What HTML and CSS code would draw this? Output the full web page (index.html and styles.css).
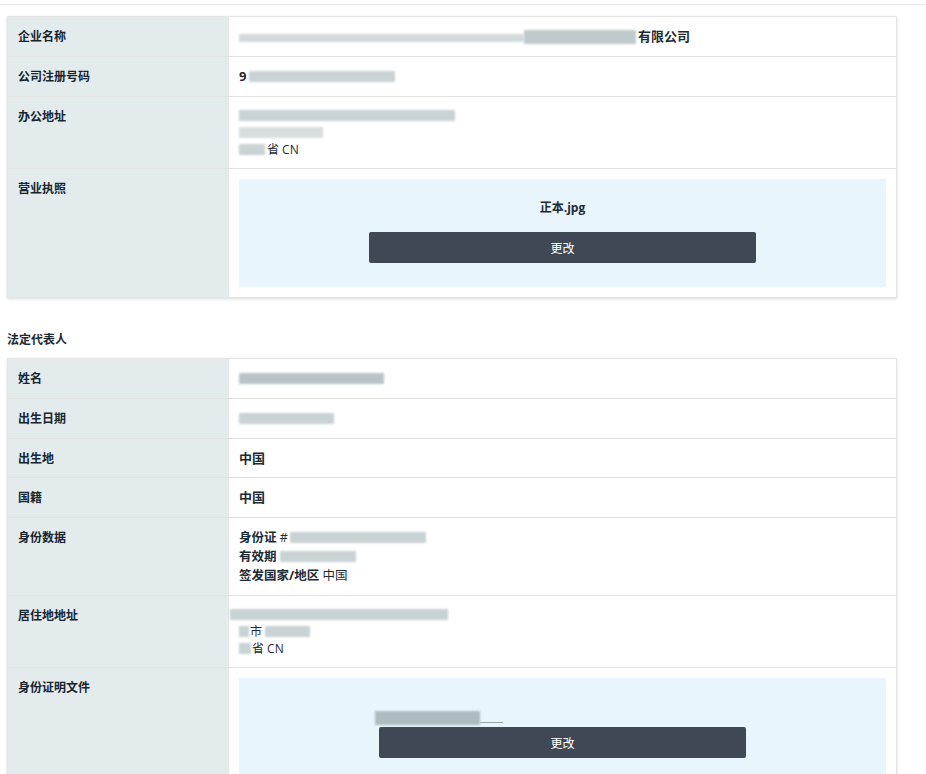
FILE: index.html
```html
<!DOCTYPE html>
<html lang="zh">

<head>
    <meta charset="utf-8">
    <meta name="viewport" content="width=device-width, initial-scale=1.0">
    <title>企业资料</title>
    <link rel="stylesheet" href="styles.css">
</head>

<body>

    <div class="topbar"></div>

    <main class="page">

        <section class="card">
            <div class="row">
                <div class="label">企业名称</div>
                <div class="value strong"><span class="blur b-company"></span><span class="blur b-company2"></span>有限公司</div>
            </div>
            <div class="row">
                <div class="label">公司注册号码</div>
                <div class="value strong">9<span class="blur b-regno"></span></div>
            </div>
            <div class="row">
                <div class="label">办公地址</div>
                <div class="value address">
                    <div><span class="blur b-addr1"></span></div>
                    <div><span class="blur b-addr2"></span></div>
                    <div><span class="blur b-addr3"></span>省 CN</div>
                </div>
            </div>
            <div class="row">
                <div class="label">营业执照</div>
                <div class="value file-cell">
                    <div class="upload">
                        <div class="filename">正本.jpg</div>
                        <button class="btn">更改</button>
                    </div>
                </div>
            </div>
        </section>

        <h3 class="section-title">法定代表人</h3>

        <section class="card">
            <div class="row">
                <div class="label">姓名</div>
                <div class="value"><span class="blur b-name"></span></div>
            </div>
            <div class="row">
                <div class="label">出生日期</div>
                <div class="value"><span class="blur b-birth"></span></div>
            </div>
            <div class="row row-tight">
                <div class="label">出生地</div>
                <div class="value strong">中国</div>
            </div>
            <div class="row">
                <div class="label">国籍</div>
                <div class="value strong">中国</div>
            </div>
            <div class="row">
                <div class="label">身份数据</div>
                <div class="value idlist">
                    <div><b>身份证</b> #<span class="blur b-idno"></span></div>
                    <div><b>有效期</b> <span class="blur b-expiry"></span></div>
                    <div><b>签发国家/地区</b> 中国</div>
                </div>
            </div>
            <div class="row">
                <div class="label">居住地地址</div>
                <div class="value address">
                    <div><span class="blur b-home1"></span></div>
                    <div><span class="blur b-home2"></span>市 <span class="blur b-home3"></span></div>
                    <div><span class="blur b-home4"></span>省 CN</div>
                </div>
            </div>
            <div class="row">
                <div class="label">身份证明文件</div>
                <div class="value file-cell">
                    <div class="upload upload-id">
                        <div class="filename"><span class="blur b-file"></span><span class="file-line"></span></div>
                        <button class="btn btn-id">更改</button>
                    </div>
                </div>
            </div>
        </section>

    </main>

</body>

</html>
```

FILE: styles.css
```css
body {
    margin: 0;
    background-color: #fff;
    font-family: "Open Sans", "Noto Sans CJK SC", sans-serif;
    font-size: 12px;
    color: #1e2a33;
}

.topbar {
    height: 4px;
    border-bottom: 1px solid #e9e9e9;
}

.page {
    width: 890px;
    margin-left: 7px;
    padding-top: 11px;
}

.card {
    border: 1px solid #e4e4e4;
    box-shadow: 0 1px 3px rgba(0, 0, 0, 0.15);
    background-color: #fff;
}

.row {
    display: grid;
    grid-template-columns: 221px 1fr;
    border-top: 1px solid #e2e2e2;
}

.row:first-child {
    border-top: none;
}

.label {
    background-color: #e3ebed;
    padding: 11px 10px;
    line-height: 17px;
    font-weight: 700;
    color: #17252f;
}

.value {
    padding: 11px 10px;
    line-height: 17px;
    font-size: 13px;
}

.row-tight .label,
.row-tight .value {
    padding-bottom: 10px;
}

.strong {
    font-weight: 700;
}

.address {
    padding-top: 10px;
    padding-bottom: 10px;
    font-size: 12px;
}

.idlist {
    padding-top: 10px;
    padding-bottom: 10px;
    line-height: 19px;
    font-size: 12.5px;
}

.idlist b {
    font-weight: 700;
}

.section-title {
    margin: 0;
    padding: 33px 0 10px;
    font-size: 12px;
    line-height: 17px;
    font-weight: 700;
}

/* upload box */
.file-cell {
    padding-top: 10px;
    padding-bottom: 10px;
}

.upload {
    background-color: #e8f5fd;
    height: 108px;
    box-sizing: border-box;
    padding-top: 20px;
    display: flex;
    flex-direction: column;
    align-items: center;
}

.filename {
    font-size: 12px;
    font-weight: 700;
    line-height: 18px;
    height: 18px;
    margin-bottom: 15px;
}

.btn {
    width: 387px;
    height: 31px;
    border: none;
    border-radius: 2px;
    background-color: #3f4955;
    color: #fff;
    font-family: "Open Sans", "Noto Sans CJK SC", sans-serif;
    font-size: 12px;
}

.upload-id {
    padding-top: 29px;
}

.upload-id .filename {
    width: 375px;
    margin-bottom: 2px;
    display: flex;
    align-items: flex-end;
}

.btn-id {
    width: 367px;
}

/* redacted parts */
.blur {
    display: inline-block;
    height: 11px;
    vertical-align: -1px;
    background-color: #c9d2d4;
    filter: blur(1.2px);
}

.b-company { width: 285px; background-color: #d3dadb; height: 8px; }
.b-company2 { width: 112px; height: 14px; margin-right: 2px; background-color: #bfcacc; vertical-align: -3px; }
.b-regno { width: 146px; margin-left: 3px; }
.b-addr1 { width: 216px; }
.b-addr2 { width: 84px; background-color: #d8dde0; }
.b-addr3 { width: 26px; margin-right: 2px; }
.b-name { width: 145px; background-color: #b9c4c8; }
.b-birth { width: 95px; }
.b-idno { width: 136px; margin-left: 2px; }
.b-expiry { width: 76px; }
.b-home1 { width: 218px; margin-left: -9px; }
.b-home2 { width: 10px; margin-right: 1px; }
.b-home3 { width: 45px; }
.b-home4 { width: 12px; margin-right: 1px; }
.b-file { width: 105px; height: 14px; background-color: #aebbbf; }
.file-line {
    display: inline-block;
    width: 23px;
    height: 1px;
    background-color: #9aa5aa;
    margin-bottom: 2px;
}
```
